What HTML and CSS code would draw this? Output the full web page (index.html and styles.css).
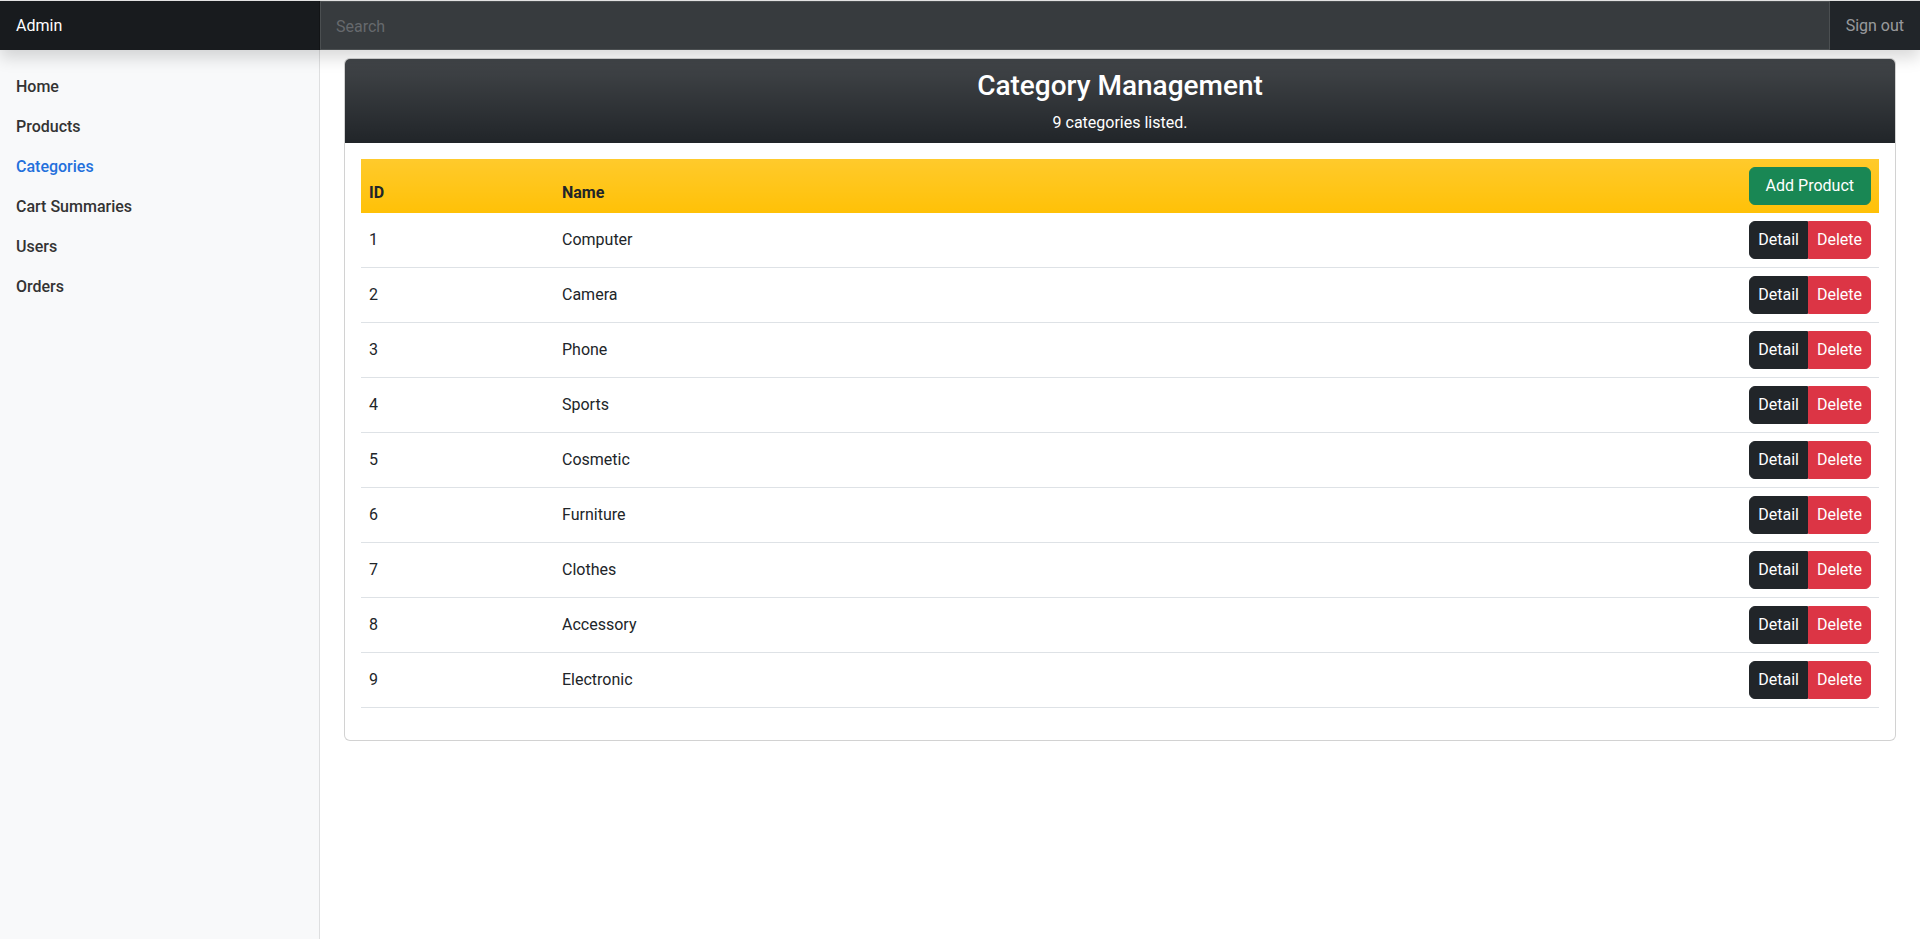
FILE: index.html
```html
<!DOCTYPE html>
<html lang="en">
<head>
<meta charset="utf-8">
<title>Admin - Category Management</title>
<link rel="stylesheet" href="styles.css">
</head>
<body>
<header class="navbar">
  <a class="brand" href="#">Admin</a>
  <input class="search" type="text" placeholder="Search" aria-label="Search">
  <a class="signout" href="#">Sign out</a>
</header>
<div class="layout">
  <nav class="sidebar">
    <ul class="nav">
      <li><a class="nav-link" href="#">Home</a></li>
      <li><a class="nav-link" href="#">Products</a></li>
      <li><a class="nav-link active" href="#">Categories</a></li>
      <li><a class="nav-link" href="#">Cart Summaries</a></li>
      <li><a class="nav-link" href="#">Users</a></li>
      <li><a class="nav-link" href="#">Orders</a></li>
    </ul>
  </nav>
  <main class="main">
    <section class="card">
      <div class="card-header">
        <h3 class="title">Category Management</h3>
        <p class="subtitle">9 categories listed.</p>
      </div>
      <div class="card-body">
        <table class="table">
          <thead>
            <tr>
              <th class="col-id">ID</th>
              <th>Name</th>
              <th class="col-actions"><button class="btn btn-success">Add Product</button></th>
            </tr>
          </thead>
          <tbody>
            <tr><td>1</td><td>Computer</td><td class="col-actions"><div class="btn-group"><button class="btn btn-dark">Detail</button><button class="btn btn-danger">Delete</button></div></td></tr>
            <tr><td>2</td><td>Camera</td><td class="col-actions"><div class="btn-group"><button class="btn btn-dark">Detail</button><button class="btn btn-danger">Delete</button></div></td></tr>
            <tr><td>3</td><td>Phone</td><td class="col-actions"><div class="btn-group"><button class="btn btn-dark">Detail</button><button class="btn btn-danger">Delete</button></div></td></tr>
            <tr><td>4</td><td>Sports</td><td class="col-actions"><div class="btn-group"><button class="btn btn-dark">Detail</button><button class="btn btn-danger">Delete</button></div></td></tr>
            <tr><td>5</td><td>Cosmetic</td><td class="col-actions"><div class="btn-group"><button class="btn btn-dark">Detail</button><button class="btn btn-danger">Delete</button></div></td></tr>
            <tr><td>6</td><td>Furniture</td><td class="col-actions"><div class="btn-group"><button class="btn btn-dark">Detail</button><button class="btn btn-danger">Delete</button></div></td></tr>
            <tr><td>7</td><td>Clothes</td><td class="col-actions"><div class="btn-group"><button class="btn btn-dark">Detail</button><button class="btn btn-danger">Delete</button></div></td></tr>
            <tr><td>8</td><td>Accessory</td><td class="col-actions"><div class="btn-group"><button class="btn btn-dark">Detail</button><button class="btn btn-danger">Delete</button></div></td></tr>
            <tr><td>9</td><td>Electronic</td><td class="col-actions"><div class="btn-group"><button class="btn btn-dark">Detail</button><button class="btn btn-danger">Delete</button></div></td></tr>
          </tbody>
        </table>
      </div>
    </section>
  </main>
</div>
</body>
</html>
```
FILE: styles.css
```css
* { box-sizing: border-box; }
html, body { height: 100%; }
body {
  margin: 0;
  font-family: Roboto, "Noto Sans", "Liberation Sans", sans-serif;
  font-size: 16px;
  line-height: 1.5;
  color: #212529;
  background: #fff;
  display: flex;
  flex-direction: column;
  border-top: 1px solid #e2e2e2;
}
a { text-decoration: none; }

.navbar {
  display: flex;
  align-items: stretch;
  height: 49px;
  background: #212529;
  box-shadow: 0 8px 16px rgba(0,0,0,.15);
  position: relative;
  z-index: 2;
  flex: none;
}
.brand {
  width: 320px;
  flex: none;
  padding: 13px 16px 11px;
  color: #fff;
  font-size: 16px;
  background: rgba(0,0,0,.25);
  box-shadow: inset -1px 0 0 rgba(0,0,0,.25);
}
.search {
  flex: 1;
  min-width: 0;
  border: 1px solid rgba(255,255,255,.1);
  background: rgba(255,255,255,.1);
  color: #fff;
  font: inherit;
  padding: 13px 16px 11px 15px;
  outline: none;
  border-radius: 0;
}
.search::placeholder { color: #66696d; }
.signout {
  flex: none;
  padding: 13px 16px 11px;
  color: rgba(255,255,255,.55);
}

.layout {
  flex: 1;
  display: flex;
  min-height: 0;
}
.sidebar {
  width: 320px;
  flex: none;
  background: #f8f9fa;
  box-shadow: inset -1px 0 0 rgba(0,0,0,.1);
  padding-top: 17px;
}
.nav {
  list-style: none;
  margin: 0;
  padding: 0;
}
.nav-link {
  display: block;
  padding: 8px 16px;
  color: #333;
  font-weight: 500;
}
.nav-link.active { color: #2470dc; }

.main {
  flex: 1;
  padding: 8px 24px 0;
  min-width: 0;
}
.card {
  border: 1px solid rgba(0,0,0,.175);
  border-radius: 6px;
  background: #fff;
}
.card-header {
  background: #212529 linear-gradient(180deg, rgba(255,255,255,.15), rgba(255,255,255,0));
  color: #fff;
  text-align: center;
  padding: 10px 16px 8px;
  border-radius: 5px 5px 0 0;
}
.title {
  margin: 0 0 8px;
  font-size: 28px;
  font-weight: 500;
  line-height: 1.2;
}
.subtitle {
  margin: 0;
  font-size: 16px;
}
.card-body {
  padding: 16px;
}
.table {
  width: 100%;
  border-collapse: collapse;
  margin-bottom: 16px;
}
.table th, .table td {
  padding: 8px;
  text-align: left;
  border-bottom: 1px solid #dee2e6;
}
.table thead tr {
  background: #ffc107 linear-gradient(180deg, rgba(255,255,255,.15), rgba(255,255,255,0));
}
.table thead th {
  vertical-align: bottom;
  font-weight: 700;
  border-bottom: 0;
}
.table td { vertical-align: middle; }
.col-id { width: 193px; }
.table .col-actions { text-align: right; }

.btn {
  font: inherit;
  font-weight: 400;
  font-size: 16px;
  line-height: 24px;
  padding: 6px 8px;
  border: 1px solid transparent;
  border-radius: 6px;
  color: #fff;
  cursor: pointer;
}
.btn-success {
  background: #198754;
  border-color: #198754;
  padding: 6px 16px;
}
.btn-group {
  display: inline-flex;
  vertical-align: middle;
}
.btn-dark {
  background: #212529;
  border-color: #212529;
  border-radius: 6px 0 0 6px;
}
.btn-danger {
  background: #dc3545;
  border-color: #dc3545;
  border-radius: 0 6px 6px 0;
}
```
